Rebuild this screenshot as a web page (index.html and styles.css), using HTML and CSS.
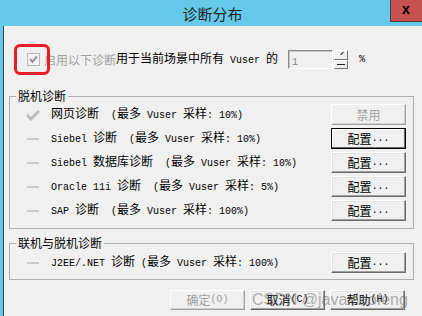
FILE: index.html
```html
<!DOCTYPE html>
<html lang="zh-CN">
<head>
  <meta charset="UTF-8" />
  <title>诊断分布</title>
  <link rel="stylesheet" href="styles.css">
</head>
<body>
  <div class="window">
    <div class="titlebar">
      <span></span>
      <span class="title">诊断分布</span>
      <span class="close">
        <svg width="32" height="22" viewBox="0 0 32 22">
          <rect x="0" y="0" width="32" height="22" fill="#4f3a3a" />
          <rect x="1" y="0" width="31" height="21" fill="#c75050" />
        </svg>
        <span class="close-x">x</span>
      </span>
    </div>

    <div class="content">
      <!-- 顶部：启用诊断 -->
      <div class="enable-row">
        <span class="checkbox">
          <svg width="13" height="13" viewBox="0 0 13 13">
            <rect x="0.5" y="0.5" width="12" height="12" fill="#f4f4f4" stroke="#b9b9b9" />
            <polyline points="3,6 5.5,9 10,3.5" fill="none" stroke="#9a9a9a" stroke-width="2" />
          </svg>
        </span>
        <span class="muted">启用以下诊断</span><span>用于当前场景中所有<span class="en"> Vuser </span>的</span>
        <span class="spin">
          <span class="spin-input"><span class="en">1</span></span>
          <span class="spin-arrows">
            <span class="arrow up"></span>
            <span class="arrow down"></span>
          </span>
        </span>
        <span class="en pct">%</span>
      </div>

      <fieldset class="group">
        <legend>脱机诊断</legend>
        <div class="row">
          <span class="icon">
            <svg width="16" height="12" viewBox="0 0 16 12">
              <polyline points="2,6 6,10 14,2" fill="none" stroke="#bdbdbd" stroke-width="3" />
            </svg>
          </span>
          <span class="label">网页诊断<span class="en">  (</span>最多<span class="en"> Vuser </span>采样<span class="en">: 10%)</span></span>
          <span class="btn disabled">禁用</span>
        </div>
        <div class="row">
          <span class="icon"><span class="dash"></span></span>
          <span class="label"><span class="en">Siebel </span>诊断<span class="en">  (</span>最多<span class="en"> Vuser </span>采样<span class="en">: 10%)</span></span>
          <span class="btn focused">配置<span class="en">...</span></span>
        </div>
        <div class="row">
          <span class="icon"><span class="dash"></span></span>
          <span class="label"><span class="en">Siebel </span>数据库诊断<span class="en">  (</span>最多<span class="en"> Vuser </span>采样<span class="en">: 10%)</span></span>
          <span class="btn">配置<span class="en">...</span></span>
        </div>
        <div class="row">
          <span class="icon"><span class="dash"></span></span>
          <span class="label"><span class="en">Oracle 11i </span>诊断<span class="en">  (</span>最多<span class="en"> Vuser </span>采样<span class="en">: 5%)</span></span>
          <span class="btn">配置<span class="en">...</span></span>
        </div>
        <div class="row">
          <span class="icon"><span class="dash"></span></span>
          <span class="label"><span class="en">SAP </span>诊断<span class="en">  (</span>最多<span class="en"> Vuser </span>采样<span class="en">: 100%)</span></span>
          <span class="btn">配置<span class="en">...</span></span>
        </div>
      </fieldset>

      <fieldset class="group second">
        <legend>联机与脱机诊断</legend>
        <div class="row">
          <span class="icon"><span class="dash"></span></span>
          <span class="label"><span class="en">J2EE/.NET </span>诊断<span class="en"> (</span>最多<span class="en"> Vuser </span>采样<span class="en">: 100%)</span></span>
          <span class="btn">配置<span class="en">...</span></span>
        </div>
      </fieldset>

      <div class="actions">
        <span class="btn disabled">确定<span class="en">(O)</span></span>
        <span class="btn">取消<span class="en">(C)</span></span>
        <span class="btn">帮助<span class="en">(H)</span></span>
      </div>
    </div>

    <!-- 标注 / 水印 -->
    <div class="mark"></div>
    <div class="watermark">CSDN @javaxiaofeng</div>
  </div>
</body>
</html>
```

FILE: styles.css
```css
:root {
  --title-bg: #65c9e9;
  --dialog-bg: #f0f0f0;
  --group-line: #adadad;
  --muted: #a0a0a0;
}

body {
  margin: 0;
  background: var(--dialog-bg);
  font-family: "Noto Sans CJK SC", sans-serif;
  font-size: 12px;
  line-height: 16px;
  color: #000;
}

.window {
  position: relative;
  width: 422px;
  height: 316px;
  box-sizing: border-box;
  border-left: 3px solid var(--title-bg);
  box-shadow: inset 1px 0 #3f3f3f;
  overflow: hidden;
}

.en {
  font-family: "Liberation Mono", monospace;
  font-size: 10px;
  white-space: pre;
}

.titlebar {
  height: 26px;
  background: var(--title-bg);
  display: grid;
  grid-template-columns: 1fr auto 1fr;
  align-items: center;
}

.title {
  font-size: 15px;
  color: #1d1d1d;
  margin-top: 1px;
}

.close {
  justify-self: end;
  align-self: start;
  display: grid;
  width: 32px;
  height: 22px;
}

.close svg,
.close-x {
  grid-area: 1 / 1;
}

.close-x {
  font-family: "Liberation Sans", sans-serif;
  font-weight: bold;
  font-size: 14px;
  line-height: 19px;
  text-align: center;
  color: #000;
}

.content {
  padding-top: 24px;
}

/* 顶部 */
.enable-row {
  display: flex;
  align-items: center;
  height: 19px;
  margin-left: 24px;
  white-space: nowrap;
}

.checkbox {
  display: flex;
  margin-right: 4px;
}

.muted {
  color: var(--muted);
}

.spin {
  display: flex;
  margin-left: 10px;
}

.spin-input {
  width: 45px;
  height: 19px;
  box-sizing: border-box;
  border: 1px solid;
  border-color: #8a8a8a #fff #fff #8a8a8a;
  box-shadow: inset 1px 1px #c4c4c4;
  background: #f0f0f0;
  color: #8a8a8a;
  padding-left: 3px;
  line-height: 17px;
}

.spin-arrows {
  display: flex;
  flex-direction: column;
  width: 14px;
  margin-left: 1px;
}

.arrow {
  height: 9.5px;
  box-sizing: border-box;
  background: #f0f0f0;
  border: 1px solid;
  border-color: #fff #6f6f6f #6f6f6f #fff;
  position: relative;
}

.arrow.up::after {
  content: "";
  position: absolute;
  left: 5px;
  top: 2px;
  width: 4px;
  height: 1px;
  background: #222;
  transform: rotate(-45deg);
}

.arrow.down::after {
  content: "";
  position: absolute;
  left: 2px;
  top: 3px;
  width: 8px;
  height: 1px;
  background: #222;
}

.pct {
  margin-left: 11px;
}

/* 分组 */
.group {
  margin: 19px 8px 0 6px;
  padding: 0 7px 7px 0;
  border: 1px solid var(--group-line);
  min-width: 0;
  display: flex;
  flex-direction: column;
  gap: 3px;
}

.group legend {
  margin-left: 6px;
  padding: 0 2px;
  line-height: 16px;
}

.group.second {
  margin-top: 6px;
  padding-top: 1px;
  padding-bottom: 6px;
}

.row {
  display: flex;
  align-items: center;
  height: 21px;
}

.icon {
  width: 17px;
  margin-left: 14px;
  display: flex;
  justify-content: center;
  align-items: center;
}

.dash {
  width: 12px;
  height: 2px;
  background: #c9c9c9;
}

.label {
  margin-left: 10px;
  white-space: pre;
}

.btn {
  margin-left: auto;
  width: 75px;
  height: 21px;
  box-sizing: border-box;
  background: #f0f0f0;
  border: 1px solid;
  border-color: #fff #6a6a6a #6a6a6a #fff;
  box-shadow: inset -1px -1px #a0a0a0, inset 1px 1px #e3e3e3;
  display: flex;
  justify-content: center;
  align-items: center;
}

.btn.focused {
  border-color: #000;
  box-shadow: inset -1px -1px #6a6a6a, inset 1px 1px #fff;
}

.btn.disabled {
  color: var(--muted);
  border-color: #fff #a0a0a0 #a0a0a0 #fff;
  box-shadow: inset -1px -1px #d0d0d0;
}

.actions {
  display: flex;
  justify-content: flex-end;
  gap: 5px;
  margin: 10px 17px 0 0;
}

.actions .btn {
  margin-left: 0;
  height: 20px;
}

/* 红框标注 */
.mark {
  position: absolute;
  left: 11px;
  top: 44px;
  width: 36px;
  height: 31px;
  box-sizing: border-box;
  border: 3px solid #ec1c24;
  border-radius: 6px;
}

.watermark {
  position: absolute;
  left: 249px;
  top: 292px;
  font-family: "Liberation Sans", sans-serif;
  font-size: 16px;
  color: rgba(110, 110, 110, 0.55);
  white-space: nowrap;
}
```
